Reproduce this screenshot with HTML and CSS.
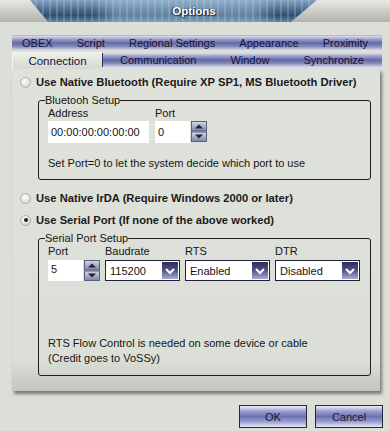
FILE: index.html
```html
<!DOCTYPE html>
<html lang="en">
<head>
    <meta charset="UTF-8">
    <title>Options</title>
    <link rel="stylesheet" href="styles.css">
</head>
<body>

    <div class="titlebar">
        <div class="title-plate"><span>Options</span></div>
    </div>

    <div class="tabs">
        <div class="tab-row back">
            <span>OBEX</span>
            <span>Script</span>
            <span>Regional Settings</span>
            <span>Appearance</span>
            <span>Proximity</span>
        </div>
        <div class="tab-row front">
            <span class="tab-active">Connection</span>
            <div class="tab-strip">
                <span>Communication</span>
                <span>Window</span>
                <span>Synchronize</span>
            </div>
        </div>
    </div>

    <div class="panel">
        <div class="radio-row first"><span class="radio"></span>Use Native Bluetooth (Require XP SP1, MS Bluetooth Driver)</div>

        <fieldset class="group bt">
            <legend>Bluetooh Setup</legend>
            <div class="fields">
                <div class="field">
                    <label>Address</label>
                    <div class="textbox addr">00:00:00:00:00:00</div>
                </div>
                <div class="field">
                    <label>Port</label>
                    <div class="spin-wrap">
                        <div class="textbox port">0</div>
                        <svg class="spin" width="16" height="21" viewBox="0 0 16 21">
                            <defs>
                                <linearGradient id="sg1" x1="0" y1="0" x2="0" y2="1">
                                    <stop offset="0" stop-color="#d4dae8"/>
                                    <stop offset="1" stop-color="#7a84a6"/>
                                </linearGradient>
                            </defs>
                            <rect x="0.5" y="0.5" width="15" height="9.5" fill="url(#sg1)" stroke="#59607e"/>
                            <rect x="0.5" y="11" width="15" height="9.5" fill="url(#sg1)" stroke="#59607e"/>
                            <path d="M4 7.5 L8 3.5 L12 7.5 Z" fill="#1e2238"/>
                            <path d="M4 13.5 L8 17.5 L12 13.5 Z" fill="#1e2238"/>
                        </svg>
                    </div>
                </div>
            </div>
            <p class="note">Set Port=0 to let the system decide which port to use</p>
        </fieldset>

        <div class="radio-row irda"><span class="radio"></span>Use Native IrDA (Require Windows 2000 or later)</div>
        <div class="radio-row serial"><span class="radio checked"></span>Use Serial Port (If none of the above worked)</div>

        <fieldset class="group sp">
            <legend>Serial Port Setup</legend>
            <div class="fields">
                <div class="field">
                    <label>Port</label>
                    <div class="spin-wrap">
                        <div class="textbox port small">5</div>
                        <svg class="spin" width="16" height="21" viewBox="0 0 16 21">
                            <rect x="0.5" y="0.5" width="15" height="9.5" fill="url(#sg1)" stroke="#59607e"/>
                            <rect x="0.5" y="11" width="15" height="9.5" fill="url(#sg1)" stroke="#59607e"/>
                            <path d="M4 7.5 L8 3.5 L12 7.5 Z" fill="#1e2238"/>
                            <path d="M4 13.5 L8 17.5 L12 13.5 Z" fill="#1e2238"/>
                        </svg>
                    </div>
                </div>
                <div class="field">
                    <label>Baudrate</label>
                    <div class="dropdown baud"><span>115200</span><span class="arrow"><svg width="10" height="8" viewBox="0 0 10 8"><path d="M1 2 L5 6 L9 2" fill="none" stroke="#fff" stroke-width="2"/></svg></span></div>
                </div>
                <div class="field">
                    <label>RTS</label>
                    <div class="dropdown wide"><span>Enabled</span><span class="arrow"><svg width="10" height="8" viewBox="0 0 10 8"><path d="M1 2 L5 6 L9 2" fill="none" stroke="#fff" stroke-width="2"/></svg></span></div>
                </div>
                <div class="field">
                    <label>DTR</label>
                    <div class="dropdown wide"><span>Disabled</span><span class="arrow"><svg width="10" height="8" viewBox="0 0 10 8"><path d="M1 2 L5 6 L9 2" fill="none" stroke="#fff" stroke-width="2"/></svg></span></div>
                </div>
            </div>
            <p class="note flow">RTS Flow Control is needed on some device or cable<br>(Credit goes to VoSSy)</p>
        </fieldset>
    </div>

    <div class="buttons">
        <button>OK</button>
        <button>Cancel</button>
    </div>

</body>
</html>
```

FILE: styles.css
```css
body {
    margin: 0;
    width: 390px;
    height: 431px;
    overflow: hidden;
    background: #dcdfd7;
    font-family: "Liberation Sans", Arial, sans-serif;
    font-size: 11px;
    color: #151515;
}
.titlebar {
    height: 22px;
    background: linear-gradient(#e8e8e4, #b2b3ab);
    display: flex;
}
.title-plate {
    width: 287px;
    height: 22px;
    margin-left: 30px;
    clip-path: polygon(0 0, 100% 0, 90.9% 100%, 6.3% 100%);
    background:
        repeating-linear-gradient(90deg, rgba(190,215,235,0) 0 5px, rgba(190,215,235,0.25) 5px 7px),
        linear-gradient(to right, rgba(255,255,255,0) 22%, rgba(160,190,215,0.45) 30%, rgba(160,190,215,0.45) 78%, rgba(255,255,255,0) 86%),
        linear-gradient(#86a4c2, #4a6a8c 45%, #2e4e70 70%, #6484a4);
    display: flex;
    align-items: center;
    justify-content: center;
    padding-left: 41px;
    box-sizing: border-box;
}
.title-plate span {
    color: #fff;
    font-weight: bold;
    font-size: 11.5px;
    text-shadow: 1px 1px 1px #1a2a40, -1px 0 1px #1a2a40;
}
.tabs {
    margin: 13px 8px 0 12px;
}
.tab-row {
    display: flex;
    align-items: center;
    color: #14143a;
}
.back {
    height: 14px;
    justify-content: space-between;
    padding: 0 14px 0 10px;
    border-top: 1px solid #b9bbb4;
    background: linear-gradient(#dcdeec 0, #a4a7d0 20%, #6468a2 50%, #878bbc 75%, #d4d6ea 100%);
}
.front {
    height: 17px;
    margin-top: 2px;
    align-items: stretch;
}
.tab-active {
    width: 90px;
    display: flex;
    align-items: center;
    justify-content: center;
    font-size: 11.5px;
    border-top: 1px solid #f4f5f0;
    border-left: 1px solid #f4f5f0;
    background: linear-gradient(#eceee8, #d6d9d0);
    box-sizing: border-box;
}
.tab-strip {
    flex: 1;
    height: 14px;
    margin-top: 1px;
    display: flex;
    align-items: center;
    justify-content: space-between;
    padding: 0 18px 0 17px;
    border-left: 1px solid #30345a;
    background: linear-gradient(#dcdeec 0, #a4a7d0 20%, #6468a2 50%, #878bbc 75%, #d4d6ea 100%);
}
.panel {
    margin-left: 12px;
    width: 368px;
    height: 322px;
    box-sizing: border-box;
    padding: 6px 9px 0 8px;
    background: linear-gradient(#dfe2da 0, #dcdfd7 90%, #c2c6bd 100%);
    box-shadow: 2px 3px 3px rgba(0, 0, 0, 0.45);
    display: flex;
    flex-direction: column;
}
.radio-row {
    display: flex;
    align-items: center;
    height: 14px;
    font-weight: bold;
    font-size: 11.2px;
    color: #1a1a1a;
}
.radio {
    width: 11px;
    height: 11px;
    border-radius: 50%;
    border: 1px solid #aeb0aa;
    box-sizing: border-box;
    background: radial-gradient(circle at 40% 35%, #ffffff, #c9cbc5);
    margin-right: 5px;
    display: flex;
    align-items: center;
    justify-content: center;
}
.radio.checked::after {
    content: "";
    width: 4px;
    height: 4px;
    border-radius: 50%;
    background: #222;
}
.irda {
    margin-top: 11px;
}
.serial {
    margin-top: 8px;
}
.group {
    margin: 5px 0 0 18px;
    padding: 0 0 9px 9px;
    border: 1px solid #1e1e1e;
    border-radius: 3px;
}
.group legend {
    padding: 0;
    margin-left: -3px;
    line-height: 13px;
    font-size: 11px;
}
.fields {
    display: flex;
    gap: 6px;
}
.sp .fields {
    gap: 5px;
}
.field label {
    display: block;
    line-height: 13px;
}
.textbox {
    background: #fff;
    height: 22px;
    line-height: 22px;
    padding-left: 3px;
    box-sizing: border-box;
    margin-top: 1px;
}
.addr {
    width: 101px;
}
.port {
    width: 35px;
}
.small {
    height: 21px;
    line-height: 19px;
    margin-top: 2px;
}
.spin-wrap {
    display: flex;
    align-items: flex-start;
    gap: 1px;
}
.spin {
    margin-top: 1px;
    display: block;
}
.sp .spin {
    margin-top: 2px;
}
.note {
    margin: 14px 0 0;
    line-height: 13px;
}
.flow {
    margin-top: 55px;
    line-height: 15px;
}
.dropdown {
    margin-top: 2px;
    height: 21px;
    border: 1px solid #20203a;
    background: #fff;
    box-sizing: border-box;
    display: flex;
    align-items: center;
    justify-content: space-between;
    padding-left: 4px;
}
.baud {
    width: 75px;
}
.wide {
    width: 85px;
}
.arrow {
    width: 16px;
    height: 17px;
    margin-right: 1px;
    background: linear-gradient(#2a2c52, #50548a 50%, #a9abd0);
    display: flex;
    align-items: center;
    justify-content: center;
}
.arrow svg {
    display: block;
}
.buttons {
    display: flex;
    justify-content: flex-end;
    gap: 8px;
    margin: 14px 7px 0 0;
}
button {
    width: 68px;
    height: 23px;
    border: 1px solid #262636;
    background: linear-gradient(#eef0f8 0, #9a9ed0 25%, #6c70b0 50%, #9a9ed0 75%, #e6e8f4 100%);
    font-family: "Liberation Sans", Arial, sans-serif;
    font-size: 11px;
    color: #18183a;
    padding: 0;
}
```
